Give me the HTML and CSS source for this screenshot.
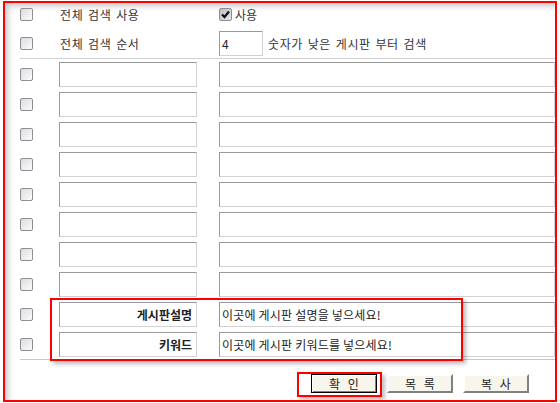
FILE: index.html
```html
<!DOCTYPE html>
<html>
<head>
<meta name="viewport" content="width=device-width, initial-scale=1">
<link rel="stylesheet" href="styles.css">
</head>
<body>

<div class="frame">
  <form class="board-form" onsubmit="event.preventDefault()">

    <div class="row row-first">
      <span class="chk"></span>
      <div class="label-cell">전체 검색 사용</div>
      <div class="value-cell">
        <span class="chk chk-on">
          <svg width="11" height="11" viewBox="0 0 11 11"><path d="M2 5.5 L4.5 8 L9 2.5" fill="none" stroke="#111" stroke-width="2.2"/></svg>
        </span>
        <span class="opt-text">사용</span>
      </div>
    </div>

    <div class="row row-second">
      <span class="chk"></span>
      <div class="label-cell">전체 검색 순서</div>
      <div class="value-cell">
        <input type="text" class="box box-small" value="4">
        <span class="hint">숫자가 낮은 게시판 부터 검색</span>
      </div>
    </div>

    <div class="list">
      <div class="row"><span class="chk"></span><input type="text" class="box box-label"><input type="text" class="box box-value"></div>
      <div class="row"><span class="chk"></span><input type="text" class="box box-label"><input type="text" class="box box-value"></div>
      <div class="row"><span class="chk"></span><input type="text" class="box box-label"><input type="text" class="box box-value"></div>
      <div class="row"><span class="chk"></span><input type="text" class="box box-label"><input type="text" class="box box-value"></div>
      <div class="row"><span class="chk"></span><input type="text" class="box box-label"><input type="text" class="box box-value"></div>
      <div class="row"><span class="chk"></span><input type="text" class="box box-label"><input type="text" class="box box-value"></div>
      <div class="row"><span class="chk"></span><input type="text" class="box box-label"><input type="text" class="box box-value"></div>
      <div class="row"><span class="chk"></span><input type="text" class="box box-label"><input type="text" class="box box-value"></div>
      <div class="row"><span class="chk"></span><input type="text" class="box box-label label-bold" value="게시판설명"><input type="text" class="box box-value" value="이곳에 게시판 설명을 넣으세요!"></div>
      <div class="row"><span class="chk"></span><input type="text" class="box box-label label-bold" value="키워드"><input type="text" class="box box-value" value="이곳에 게시판 키워드를 넣으세요!"></div>
    </div>

    <div class="buttons">
      <button type="submit" class="btn btn-default">확 인</button>
      <button type="button" class="btn">목 록</button>
      <button type="button" class="btn">복 사</button>
    </div>
  </form>

  <!-- annotation boxes drawn over the form -->
  <div class="mark mark-fields"></div>
  <div class="mark mark-ok"></div>
</div>

</body>
</html>
```

FILE: styles.css
```css
body {
  margin: 0;
  font-family: "Noto Sans CJK KR", "DejaVu Sans", sans-serif;
  font-size: 12px;
  color: #333;
  background: #fff;
}
* {box-sizing: border-box;}

/* red outline of the captured window */
.frame {
  position: relative;
  margin: 1px 0 0 3px;
  width: 554px;
  height: 401px;
  border: 2px solid #f00;
  box-shadow: inset 6px 6px 6px -3px rgba(0,0,0,0.22);
  overflow: hidden;
}

.board-form {
  padding-left: 15px;
}

.row {
  display: flex;
  align-items: center;
  height: 30px;
}
.row-first {
  height: 20px;
  margin-top: 1px;
}
.row-second {
  height: 30px;
  margin-top: 5px;
  border-bottom: 1px solid #d0d0d0;
}

/* checkboxes */
.chk {
  display: inline-flex;
  align-items: center;
  justify-content: center;
  width: 13px;
  height: 13px;
  flex: none;
  border: 1px solid #8e8e8e;
  border-radius: 2px;
  background: linear-gradient(135deg, #d9dce2, #fcfcfc);
}
.chk-on {
  background: linear-gradient(135deg, #b9bec8, #e4e6ea);
}

.label-cell {
  width: 160px;
  margin-left: 26px;
  padding-left: 1px;
  letter-spacing: 0.6px;
  word-spacing: 1.5px;
}
.value-cell {
  display: flex;
  align-items: center;
}
.opt-text {
  margin-left: 3px;
}
.hint {
  margin-left: 5px;
  letter-spacing: 0.6px;
  word-spacing: 1.5px;
}

/* text boxes */
.box {
  height: 25px;
  border: 1px solid;
  border-color: #9a9a9a #d2d2d2 #d2d2d2 #9a9a9a;
  background: #fff;
  font-family: "Noto Sans CJK KR", "DejaVu Sans", sans-serif;
  font-size: 12px;
  color: #222;
  padding: 0 2px;
  outline: none;
}
.box-small {
  width: 44px;
}
.box-label {
  width: 138px;
  margin-left: 26px;
}
.box-value {
  width: 337px;
  margin-left: 22px;
  letter-spacing: 0.2px;
}
.label-bold {
  font-weight: bold;
  text-align: right;
  padding-right: 4px;
}

.list {
  border-bottom: 1px solid #c8c8c8;
}

/* bottom buttons */
.buttons {
  display: flex;
  gap: 10px;
  padding-left: 291px;
  margin-top: 14px;
}
.btn {
  width: 66px;
  height: 19px;
  padding: 0;
  background: #f8f5ec;
  border: 2px solid;
  border-color: #fff #808080 #808080 #fff;
  font-family: "Noto Sans CJK KR", "DejaVu Sans", sans-serif;
  font-size: 12px;
  color: #222;
  line-height: 14px;
  word-spacing: 5px;
}
.btn-default {
  border: 1px solid #000;
  box-shadow: inset 1px 1px 0 #fff, inset -1px -1px 0 #808080;
}

/* red annotation boxes */
.mark {
  position: absolute;
  border: 2px solid #f00;
  box-shadow: 3px 3px 4px rgba(0,0,0,0.25);
}
.mark-fields {
  left: 45px;
  top: 295px;
  width: 413px;
  height: 63px;
}
.mark-ok {
  left: 292px;
  top: 369px;
  width: 85px;
  height: 25px;
}
```
